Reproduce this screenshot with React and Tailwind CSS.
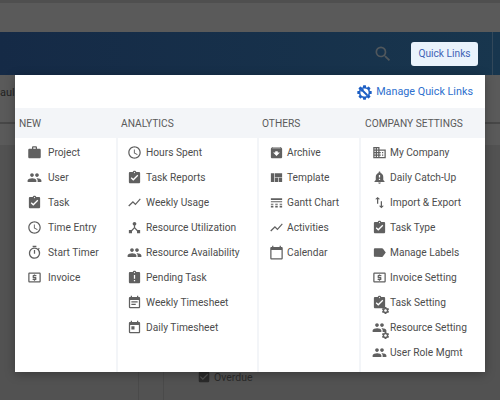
import {
  MdWork, MdPeople, MdAssignmentTurnedIn, MdAccessTime, MdOutlineTimer, MdOutlineLocalAtm, MdShowChart, MdDeviceHub,
  MdAssignmentLate, MdEventNote, MdToday, MdArchive, MdViewQuilt, MdCalendarToday, MdDomain,
  MdNotificationImportant, MdImportExport, MdLabel, MdSettings, MdSearch, MdCheckBox,
} from 'react-icons/md';

// Gantt chart glyph, no package has this one
const GanttIcon = ({ className }) => (
  <svg className={className} viewBox="0 0 24 24" fill="currentColor">
    <path d="M3 5h18v3H3zM3 10h18v1.500H3zM3 14h4v1.500H3zM10 14h4v1.500h-4zM17 14h4v1.500h-4zM3 17h4v3H3zM10 17h4v3h-4zM17 17h4v3h-4z" />
  </svg>
);

// Gear with a wrench across it, next to Manage Quick Links
const ManageIcon = ({ className }) => (
  <svg className={className} viewBox="0 0 24 24">
    <g fill="currentColor">
      {[0, 45, 90, 135].map((deg) => (
        <rect key={deg} x="9.500" y="0.500" width="5" height="23" rx="1" transform={`rotate(${deg} 12 12)`} />
      ))}
      <circle cx="12" cy="12" r="9" />
    </g>
    <circle cx="12" cy="12" r="6.500" fill="#fff" />
    <path d="M8 8l8 8" stroke="currentColor" strokeWidth="3" strokeLinecap="round" />
    <path d="M7 10.500a3.500 3.500 0 0 1 3.500-3.500" stroke="currentColor" strokeWidth="2" fill="none" />
  </svg>
);

const columns = [
  {
    title: 'NEW',
    width: 'w-[103px]',
    titlePad: 'pl-1',
    itemPad: 'pl-[11px]',
    iconGap: 'mr-[6px]',
    items: [
      { label: 'Project', Icon: MdWork },
      { label: 'User', Icon: MdPeople },
      { label: 'Task', Icon: MdAssignmentTurnedIn },
      { label: 'Time Entry', Icon: MdAccessTime },
      { label: 'Start Timer', Icon: MdOutlineTimer },
      { label: 'Invoice', Icon: MdOutlineLocalAtm },
    ],
  },
  {
    title: 'ANALYTICS',
    width: 'w-[141px]',
    titlePad: 'pl-[3px]',
    itemPad: 'pl-[8px]',
    iconGap: 'mr-[4px]',
    items: [
      { label: 'Hours Spent', Icon: MdAccessTime },
      { label: 'Task Reports', Icon: MdAssignmentTurnedIn },
      { label: 'Weekly Usage', Icon: MdShowChart },
      { label: 'Resource Utilization', Icon: MdDeviceHub },
      { label: 'Resource Availability', Icon: MdPeople },
      { label: 'Pending Task', Icon: MdAssignmentLate },
      { label: 'Weekly Timesheet', Icon: MdEventNote },
      { label: 'Daily Timesheet', Icon: MdToday },
    ],
  },
  {
    title: 'OTHERS',
    width: 'w-[102px]',
    titlePad: 'pl-[3px]',
    itemPad: 'pl-[9px]',
    iconGap: 'mr-[3px]',
    items: [
      { label: 'Archive', Icon: MdArchive },
      { label: 'Template', Icon: MdViewQuilt },
      { label: 'Gantt Chart', Icon: GanttIcon },
      { label: 'Activities', Icon: MdShowChart },
      { label: 'Calendar', Icon: MdCalendarToday },
    ],
  },
  {
    title: 'COMPANY SETTINGS',
    width: 'flex-1',
    titlePad: 'pl-[4px]',
    itemPad: 'pl-[10px]',
    iconGap: 'mr-[3px]',
    items: [
      { label: 'My Company', Icon: MdDomain },
      { label: 'Daily Catch-Up', Icon: MdNotificationImportant },
      { label: 'Import & Export', Icon: MdImportExport },
      { label: 'Task Type', Icon: MdAssignmentTurnedIn },
      { label: 'Manage Labels', Icon: MdLabel },
      { label: 'Invoice Setting', Icon: MdOutlineLocalAtm },
      { label: 'Task Setting', Icon: MdAssignmentTurnedIn, gear: true },
      { label: 'Resource Setting', Icon: MdPeople, gear: true },
      { label: 'User Role Mgmt', Icon: MdPeople },
    ],
  },
];

const MenuItem = ({ item, iconGap }) => {
  const { Icon } = item;
  return (
    <li className="h-[25px] flex items-center">
      <span className={`relative w-[16px] h-[16px] shrink-0 flex items-center justify-center ${iconGap}`}>
        <Icon className="w-[15px] h-[15px] text-[#606060]" />
        {item.gear && <MdSettings className="absolute -right-[3px] -bottom-[4px] w-[9px] h-[9px] text-[#606060]" />}
      </span>
      <span className="whitespace-nowrap">{item.label}</span>
    </li>
  );
};

const App = () => {
  return (
    <div className="relative w-[500px] h-[400px] overflow-hidden bg-[#525252] font-['Roboto',sans-serif]">
      {/* Dimmed page behind the menu */}
      <div className="h-[32px] bg-[#5a5a5a] border-t-[3px] border-[#4f4f4f]" />
      <div className="h-[43px] flex items-center pr-[7px] bg-gradient-to-r from-[#152a46] to-[#18364e]">
        <MdSearch className="ml-auto w-[20px] h-[20px] mr-[18px] text-[#50575c]" />
        <button className="w-[67px] h-[24px] rounded-[3px] bg-[#eaf3fc] text-[#3f63b5] text-[10.2px]">Quick Links</button>
        <div className="ml-[14px] h-full border-l border-[#33485a]" />
      </div>
      <div className="h-[49px] bg-[#5a5a5a] border-b-2 border-[#474747] text-[11px] text-[#222] leading-[36px]">aul</div>
      <div className="h-[21px] bg-[#5a5a5a]" />
      <div className="flex pl-[138px] h-[255px]">
        <div className="w-[26px] border-x border-[#4a4a4a] h-full" />
        <div className="pl-[33px] pt-[227px] flex items-start gap-[3px] text-[10.5px] text-[#2a2a2a]">
          <MdCheckBox className="w-[14px] h-[14px] -mt-[2px] text-[#2a2a2a]" />
          <span className="leading-[11px]">Overdue</span>
        </div>
      </div>

      {/* Quick links menu */}
      <div className="absolute left-[15px] top-[75px] w-[470px] h-[297px] bg-white shadow-[0_2px_10px_rgba(0,0,0,0.3)] flex flex-col">
        <div className="h-[33px] pt-[2px] flex items-center justify-end gap-[4px] pr-[12px] text-[#2e6fce] text-[10.8px]">
          <ManageIcon className="w-[15px] h-[15px] text-[#1d5fc4]" />
          <span>Manage Quick Links</span>
        </div>
        <div className="flex flex-1 text-[10.2px] text-[#4d4d4d]">
          {columns.map((col, i) => (
            <div key={col.title} className={`${col.width} ${i < 3 ? 'border-r-2 border-[#f3f5f8]' : ''} flex flex-col`}>
              <div className={`h-[30px] pt-[1px] flex items-center bg-[#f3f5f8] text-[#5a5a5a] text-[10.2px] whitespace-nowrap ${col.titlePad}`}>{col.title}</div>
              <ul className={`pt-[2px] ${col.itemPad}`}>
                {col.items.map((item) => (
                  <MenuItem key={item.label} item={item} iconGap={col.iconGap} />
                ))}
              </ul>
            </div>
          ))}
        </div>
      </div>
    </div>
  );
};

export default App;
